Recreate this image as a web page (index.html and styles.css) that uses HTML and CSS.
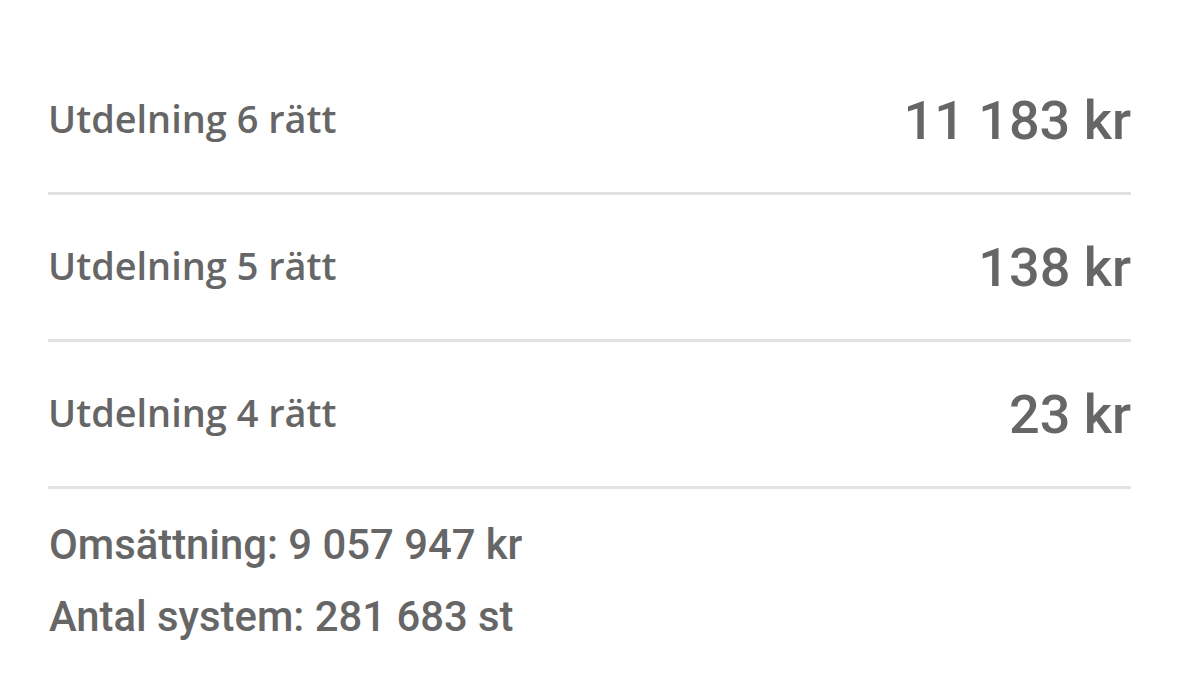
FILE: index.html
```html
<!DOCTYPE html>
<html lang="sv">
<head>
<meta charset="utf-8">
<link rel="stylesheet" href="styles.css">
</head>
<body>
<div class="card">
  <div class="row">
    <span class="label">Utdelning 6 rätt</span>
    <span class="value">11 183 kr</span>
  </div>
  <div class="row">
    <span class="label">Utdelning 5 rätt</span>
    <span class="value">138 kr</span>
  </div>
  <div class="row">
    <span class="label">Utdelning 4 rätt</span>
    <span class="value">23 kr</span>
  </div>
  <div class="info">
    <p class="line">Omsättning: 9 057 947 kr</p>
    <p class="line">Antal system: 281 683 st</p>
  </div>
</div>
</body>
</html>
```
FILE: styles.css
```css
html, body {
  margin: 0;
  padding: 0;
  background: #ffffff;
}
.card {
  padding: 48px 48px 0 48px;
  color: #666666;
}
.row {
  display: flex;
  justify-content: space-between;
  align-items: center;
  height: 144px;
  border-bottom: 3px solid #e2e2e2;
}
.label {
  font-family: "Open Sans", sans-serif;
  font-weight: 600;
  font-size: 37.9px;
  padding-left: 0;
  margin-top: -4px;
}
.value {
  font-family: Roboto, sans-serif;
  font-weight: 500;
  font-size: 54px;
  padding-right: 0;
}
.info {
  padding-top: 20px;
}
.line {
  margin: 0;
  font-family: Roboto, sans-serif;
  font-weight: 500;
  font-size: 41.8px;
  line-height: 72px;
  padding-left: 1px;
}
```
